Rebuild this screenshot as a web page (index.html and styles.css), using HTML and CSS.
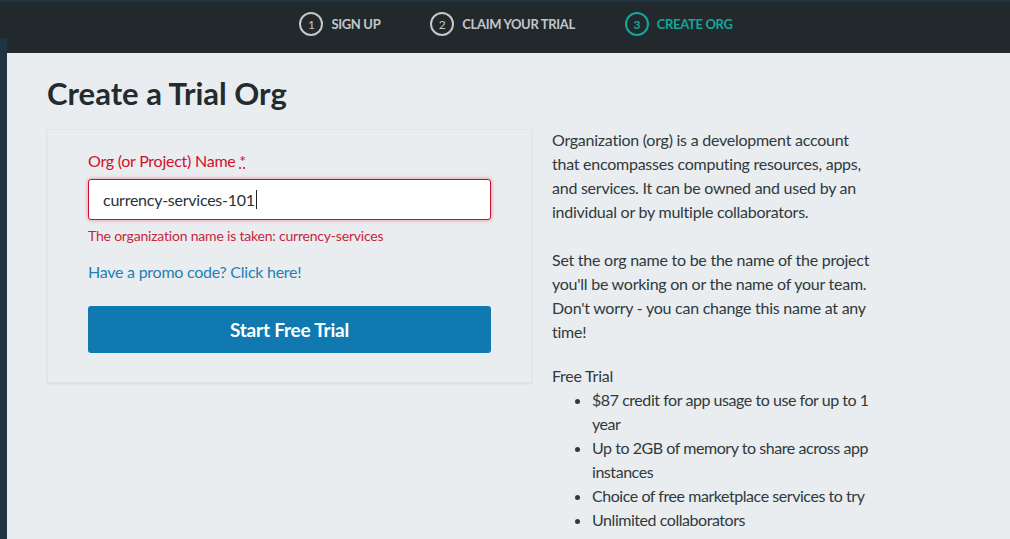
FILE: index.html
```html
<!DOCTYPE html>
<html lang="en">
<head>
<meta charset="utf-8">
<title>Create a Trial Org</title>
<link rel="stylesheet" href="styles.css">
</head>
<body>
<header class="topbar">
  <ol class="steps">
    <li class="step"><span class="step-num">1</span><span class="step-label">SIGN UP</span></li>
    <li class="step"><span class="step-num">2</span><span class="step-label">CLAIM YOUR TRIAL</span></li>
    <li class="step step-active"><span class="step-num">3</span><span class="step-label">CREATE ORG</span></li>
  </ol>
</header>
<div class="page">
  <div class="rail"></div>
  <main class="main">
    <h1 class="title">Create a Trial Org</h1>
    <div class="columns">
      <section class="card">
        <label class="field-label" for="org">Org (or Project) Name <abbr class="req" title="required">*</abbr></label>
        <div class="input"><span class="input-text">currency-services-101</span><span class="caret"></span></div>
        <p class="error">The organization name is taken: currency-services</p>
        <a class="promo" href="#">Have a promo code? Click here!</a>
        <button class="cta" type="button">Start Free Trial</button>
      </section>
      <aside class="info">
        <p>Organization (org) is a development account that encompasses computing resources, apps, and services. It can be owned and used by an individual or by multiple collaborators.</p>
        <p>Set the org name to be the name of the project you'll be working on or the name of your team. Don't worry - you can change this name at any time!</p>
        <p class="info-head">Free Trial</p>
        <ul class="perks">
          <li>$87 credit for app usage to use for up to 1 year</li>
          <li>Up to 2GB of memory to share across app instances</li>
          <li>Choice of free marketplace services to try</li>
          <li>Unlimited collaborators</li>
        </ul>
      </aside>
    </div>
  </main>
</div>
</body>
</html>
```
FILE: styles.css
```css
* { box-sizing: border-box; }
html, body { margin: 0; padding: 0; }
body {
  font-family: Lato, "Liberation Sans", sans-serif;
  background: #e9edf0;
  color: #30393d;
  height: 539px;
  overflow: hidden;
}
.topbar {
  height: 53px;
  background: linear-gradient(#1f3344, #1f3344) no-repeat left bottom / 7px 15px, #22292d;
  border-top: 2px solid #223441;
  display: flex;
  justify-content: center;
  align-items: flex-start;
  padding-top: 10px;
  padding-left: 22px;
}
.steps {
  list-style: none;
  margin: 0;
  padding: 0;
  display: flex;
  gap: 50px;
  align-items: center;
}
.step {
  display: flex;
  align-items: center;
  gap: 8px;
  color: #c3c7c9;
  font-weight: 700;
  font-size: 13px;
  letter-spacing: -0.35px;
}
.step-num {
  width: 24px;
  height: 24px;
  border: 2px solid #c3c7c9;
  border-radius: 50%;
  display: flex;
  align-items: center;
  justify-content: center;
  font-size: 12px;
  font-weight: 400;
  letter-spacing: 0;
}
.step-active { color: #17a49b; }
.step-active .step-num { border-color: #17a49b; font-weight: 700; }
.page {
  display: flex;
  height: 486px;
}
.rail {
  width: 7px;
  background: #1f3344;
}
.main {
  flex: 1;
  padding: 0 40px;
}
.title {
  margin: 22px 0 18px;
  font-size: 31px;
  font-weight: 700;
  color: #232b2f;
  line-height: 36px;
}
.columns {
  display: flex;
  gap: 20px;
  align-items: flex-start;
}
.card {
  width: 485px;
  background: #eaedf0;
  border: 1px solid #e1e5e8;
  box-shadow: 0 1px 2px rgba(0,0,0,0.08);
  padding: 20px 40px 29px 40px;
  display: flex;
  flex-direction: column;
}
.field-label {
  color: #d0102c;
  font-size: 16px;
  line-height: 22px;
  margin-bottom: 7px;
  letter-spacing: -0.25px;
}
.req {
  text-decoration: underline dotted;
  border: 0;
}
.input {
  height: 41px;
  background: #fff;
  border: 1px solid #c8102e;
  border-radius: 3px;
  box-shadow: 0 0 4px rgba(208,16,44,0.45);
  display: flex;
  align-items: center;
  padding-left: 14px;
  font-size: 16px;
  color: #2a3236;
  letter-spacing: -0.25px;
}
.caret {
  width: 1px;
  height: 19px;
  background: #222;
  margin-left: 1px;
}
.error {
  margin: 7px 0 0;
  color: #c6263b;
  font-size: 14px;
  line-height: 18px;
  letter-spacing: -0.2px;
}
.promo {
  margin-top: 17px;
  color: #2280b5;
  text-decoration: none;
  font-size: 16px;
  line-height: 20px;
  letter-spacing: -0.25px;
}
.cta {
  margin-top: 24px;
  height: 47px;
  border: 0;
  border-radius: 3px;
  background: #0f79b0;
  color: #fff;
  font-family: inherit;
  font-size: 19px;
  font-weight: 700;
  letter-spacing: -0.2px;
}
.info {
  width: 324px;
  font-size: 16px;
  line-height: 24px;
  color: #30393d;
  margin-top: -1px;
  letter-spacing: -0.25px;
}
.info p { margin: 0 0 24px; }
.info .info-head { margin: -4px 0 0; }
.perks {
  margin: 0;
  padding-left: 40px;
  letter-spacing: -0.45px;
}
```
